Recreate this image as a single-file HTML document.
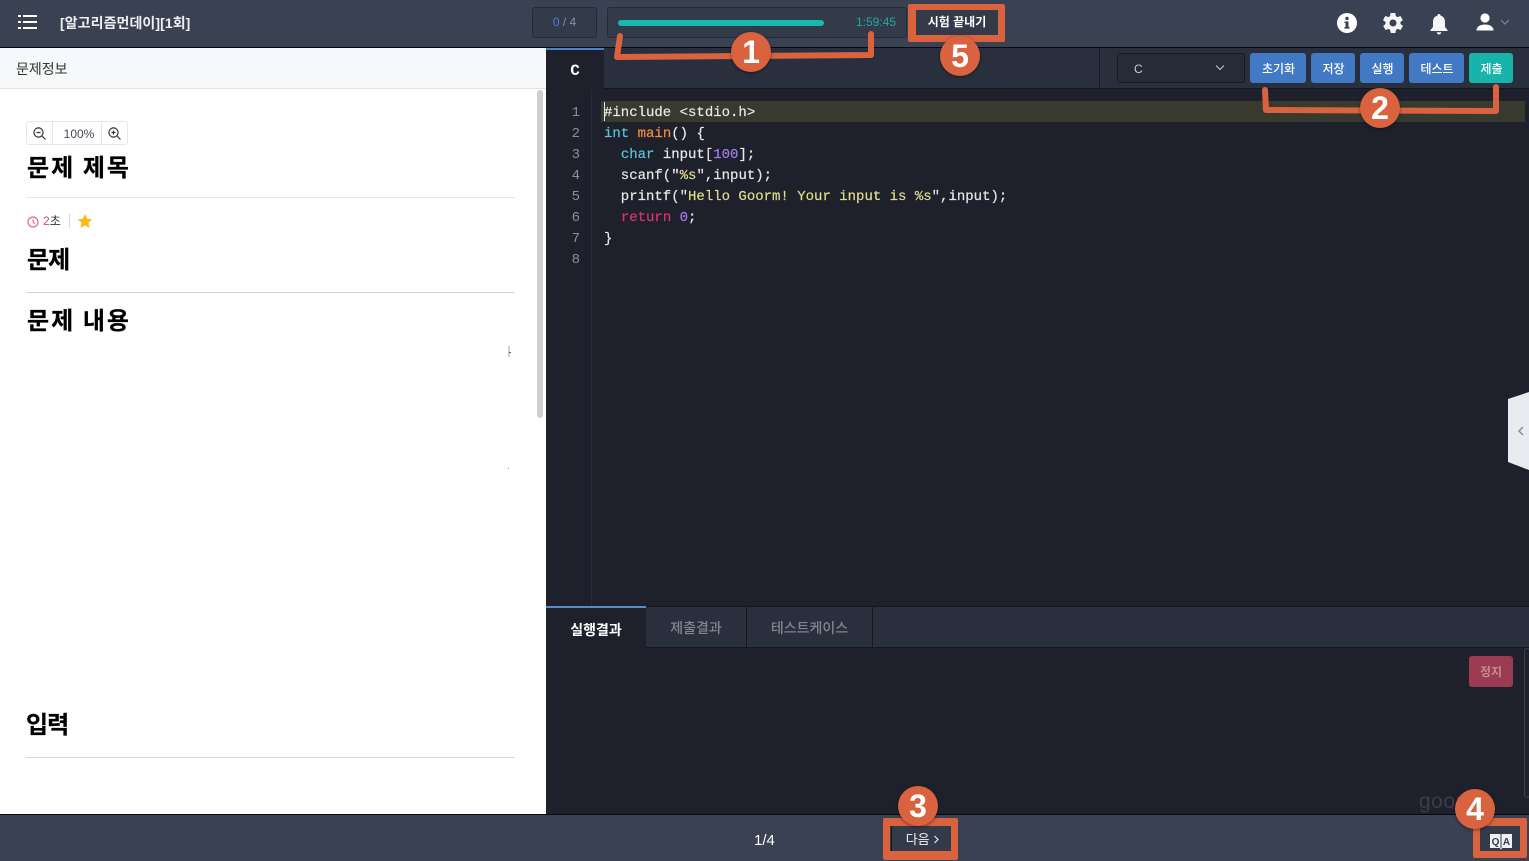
<!DOCTYPE html>
<html lang="ko"><head><meta charset="utf-8"><title>시험</title>
<style>
html,body{margin:0;padding:0;width:1529px;height:861px;overflow:hidden;background:#1e212c}
body{position:relative;font-family:"Liberation Sans","Noto Sans CJK KR",sans-serif;}
.a{position:absolute;box-sizing:border-box;white-space:nowrap}
.btn{position:absolute;top:53px;height:30px;border-radius:3px;background:#4279c4;color:#fff;font-size:12px;font-weight:500;line-height:32px;text-align:center;padding-left:1px;box-sizing:border-box}
.h{position:absolute;left:27px;color:#000;font-weight:700;font-size:24px;line-height:32px;white-space:nowrap;letter-spacing:2px;word-spacing:-1px;-webkit-text-stroke:.2px #000}
.h1{letter-spacing:-1px;word-spacing:0}
.hr{position:absolute;left:26px;width:489px;height:1px;background:#d4d5d8}
.ln{position:absolute;left:560px;width:20px;text-align:right;font:14px/21px "Liberation Mono",monospace;color:#8a8f9a}
.cd{position:absolute;left:604px;font:14px/21px "Liberation Mono",monospace;color:#e8e8e6;white-space:pre;-webkit-text-stroke:.2px}
.k{color:#5cc3d6}.f{color:#f0913a}.n{color:#a37ce8}.s{color:#e5dc8a}.r{color:#e0306e}
.circ{position:absolute;width:40px;height:40px;border-radius:50%;background:#d9623f;color:#fff;font:700 32px/40px "Liberation Sans",sans-serif;text-align:center;box-shadow:0 1px 3px rgba(0,0,0,.45)}
</style></head><body>

<!-- top bar -->
<div class="a" style="left:0;top:0;width:1529px;height:48px;background:#3a4152;border-bottom:1px solid #0a0a0e"></div>
<svg class="a" style="left:17px;top:13px" width="22" height="18" viewBox="0 0 22 18"><g fill="#fff"><rect x="1" y="2" width="3" height="2"/><rect x="6" y="2" width="14" height="2"/><rect x="1" y="8" width="3" height="2"/><rect x="6" y="8" width="14" height="2"/><rect x="1" y="14" width="3" height="2"/><rect x="6" y="14" width="14" height="2"/></g></svg>
<div class="a" style="left:60px;top:13px;color:#eef0f3;font-size:14px;font-weight:700;line-height:20px;letter-spacing:.07px">[알고리즘먼데이][1회]</div>

<div class="a" style="left:532px;top:7px;width:65px;height:31px;background:#333a4a;border:1px solid #252a36;border-radius:3px;text-align:center;font-size:12px;line-height:29px;color:#8a909c"><span style="color:#4f7fc8">0</span> / 4</div>
<div class="a" style="left:607px;top:7px;width:300px;height:31px;background:#333a4a;border:1px solid #252a36;border-radius:3px"></div>
<div class="a" style="left:618px;top:20px;width:206px;height:6px;background:#18b8ad;border-radius:3px"></div>
<div class="a" style="left:856px;top:13px;color:#26a89f;font-size:12px;line-height:18px">1:59:45</div>
<div class="a" style="left:908px;top:4px;width:97px;height:38px;border-style:solid;border-color:#d9623f;border-width:6px 7px 7px 8px;border-radius:2px;background:#333a4a;color:#fff;font-size:12px;font-weight:700;line-height:25px;text-align:center">시험 끝내기</div>

<!-- right icons -->
<svg class="a" style="left:1336px;top:12px" width="22" height="22" viewBox="0 0 22 22"><circle cx="11" cy="11" r="10" fill="#fff"/><rect x="9.500" y="9.500" width="3" height="7" fill="#3a4152"/><rect x="8.500" y="15" width="5" height="1.600" fill="#3a4152"/><rect x="8.500" y="9.500" width="3" height="1.500" fill="#3a4152"/><circle cx="11" cy="6.500" r="1.700" fill="#3a4152"/></svg>
<svg class="a" style="left:1381px;top:11px" width="24" height="24" viewBox="0 0 24 24"><path fill="#f4f5f7" fill-rule="evenodd" d="M19.400 13c.1-.3.1-.7.1-1s0-.7-.1-1l2.100-1.600c.2-.2.2-.4.1-.6l-2-3.500c-.1-.2-.4-.3-.6-.2l-2.500 1c-.5-.4-1.100-.7-1.700-1l-.4-2.600c0-.3-.2-.5-.5-.5h-4c-.3 0-.5.2-.5.500l-.4 2.600c-.6.3-1.200.6-1.700 1l-2.500-1c-.2-.1-.5 0-.6.2l-2 3.500c-.1.2-.1.4.1.6L4.600 11c-.1.300-.1.700-.1 1s0 .7.1 1l-2.100 1.600c-.2.2-.2.4-.1.6l2 3.500c.1.2.4.3.6.2l2.500-1c.5.4 1.100.7 1.700 1l.4 2.600c0 .3.2.5.5.5h4c.3 0 .5-.2.5-.5l.4-2.600c.6-.3 1.200-.6 1.700-1l2.500 1c.2.1.5 0 .6-.2l2-3.500c.1-.2.1-.4-.1-.6zM12 15.500a3.500 3.500 0 1 1 0-7 3.500 3.500 0 0 1 0 7z"/></svg>
<svg class="a" style="left:1428px;top:12px" width="22" height="24" viewBox="0 0 22 24"><path fill="#f4f5f7" d="M11 2c1 0 1.600.7 1.600 1.600C15.500 4.300 17 6.800 17 10v5l2.500 3v1h-17v-1L5 15v-5c0-3.200 1.500-5.700 4.400-6.400C9.400 2.700 10 2 11 2z"/><path fill="#f4f5f7" d="M8.800 20.300h4.400a2.200 2.200 0 0 1-4.400 0z"/></svg>
<svg class="a" style="left:1475px;top:12px" width="20" height="20" viewBox="0 0 20 20"><circle cx="10" cy="6" r="4.600" fill="#fff"/><path fill="#fff" d="M1.500 18.500c0-4 3.800-6 8.500-6s8.500 2 8.500 6z"/></svg>
<svg class="a" style="left:1499px;top:18px" width="12" height="9" viewBox="0 0 12 9"><path d="M2 2l4 4 4-4" fill="none" stroke="#7e8593" stroke-width="1.200"/></svg>

<!-- left panel -->
<div class="a" style="left:0;top:48px;width:546px;height:766px;background:#fff"></div>
<div class="a" style="left:0;top:48px;width:546px;height:41px;background:#f6f8f9;border-bottom:1px solid #e2e4e7;color:#333;font-size:14px;line-height:43px;padding-left:16px">문제정보</div>
<div class="a" style="left:537px;top:90px;width:6px;height:328px;background:#cfcfcf;border-radius:3px"></div>

<div class="a" style="left:26px;top:121px;width:102px;height:24px;border:1px solid #e6e7ea;border-radius:3px;background:#fff"></div>
<div class="a" style="left:52px;top:122px;width:1px;height:22px;background:#e6e7ea"></div>
<div class="a" style="left:101px;top:122px;width:1px;height:22px;background:#e6e7ea"></div>
<svg class="a" style="left:32px;top:126px" width="15" height="15" viewBox="0 0 15 15"><circle cx="6.500" cy="6.500" r="4.600" fill="none" stroke="#333" stroke-width="1.200"/><path d="M10 10l3.500 3.500M4.500 6.500h4" stroke="#333" stroke-width="1.200" fill="none"/></svg>
<svg class="a" style="left:107px;top:126px" width="15" height="15" viewBox="0 0 15 15"><circle cx="6.500" cy="6.500" r="4.600" fill="none" stroke="#333" stroke-width="1.200"/><path d="M10 10l3.500 3.500M4.500 6.500h4M6.500 4.500v4" stroke="#333" stroke-width="1.200" fill="none"/></svg>
<div class="a" style="left:55px;top:125px;width:48px;text-align:center;font-size:12px;line-height:19px;color:#444b58">100%</div>

<div class="h" style="top:153px">문제 제목</div>
<div class="hr" style="top:197px;background:#e4e5e8"></div>
<svg class="a" style="left:27px;top:216px" width="12" height="12" viewBox="0 0 12 12"><circle cx="6" cy="6" r="5" fill="none" stroke="#e8668a" stroke-width="1.200"/><path d="M6 3v3l2 2" fill="none" stroke="#e8668a" stroke-width="1"/></svg>
<div class="a" style="left:43px;top:213px;font-size:12px;line-height:17px;color:#333"><span style="color:#d9486c">2</span>초</div>
<div class="a" style="left:69px;top:214px;width:1px;height:14px;background:#d8d9dc"></div>
<svg class="a" style="left:77px;top:213px" width="16" height="16" viewBox="0 0 16 16"><path fill="#fcb813" d="M8 1l2.200 4.700 5 .6-3.700 3.500 1 5.100L8 12.400 3.500 14.900l1-5.100L.8 6.300l5-.6z"/></svg>

<div class="h h1" style="top:245px">문제</div>
<div class="hr" style="top:292px"></div>
<div class="h" style="top:306px">문제 내용</div>
<div class="a" style="left:508px;top:346px;width:2px;height:11px;background:#c6d2e4"></div>
<div class="a" style="left:509px;top:352px;width:2px;height:1px;background:#555"></div>
<div class="a" style="left:508px;top:468px;width:1px;height:1px;background:#9a9a9a"></div>
<div class="h h1" style="top:710px;left:26px">입력</div>
<div class="hr" style="top:757px"></div>

<!-- editor -->
<div class="a" style="left:546px;top:48px;width:983px;height:558px;background:#1e212c"></div>
<div class="a" style="left:546px;top:48px;width:983px;height:41px;background:#2a2f3d;border-bottom:1px solid #15171e"></div>
<div class="a" style="left:546px;top:48px;width:58px;height:41px;background:#1e212c;border-top:2px solid #4a82c8;color:#fff;font:700 16px/43px 'Liberation Mono',monospace;text-align:center">C</div>
<div class="a" style="left:1099px;top:48px;width:1px;height:41px;background:#1a1c25"></div>
<div class="a" style="left:591px;top:89px;width:1px;height:517px;background:#272b37"></div>

<div class="a" style="left:1117px;top:53px;width:128px;height:30px;background:#262b38;border:1px solid #171a22;border-radius:3px;color:#c9ccd2;font-size:12px;line-height:31px;padding-left:16px">C</div>
<svg class="a" style="left:1214px;top:63px" width="12" height="10" viewBox="0 0 12 10"><path d="M2 2.500l4 4 4-4" fill="none" stroke="#b8bcc4" stroke-width="1.200"/></svg>
<div class="btn" style="left:1250px;width:56px">초기화</div>
<div class="btn" style="left:1311px;width:44px">저장</div>
<div class="btn" style="left:1360px;width:44px">실행</div>
<div class="btn" style="left:1409px;width:55px">테스트</div>
<div class="btn" style="left:1469px;width:44px;background:#18b4a9">제출</div>

<div class="a" style="left:601px;top:101px;width:924px;height:21px;background:#38392f"></div>
<div class="a" style="left:604px;top:102px;width:1px;height:19px;background:#e8e8e6"></div>
<div class="ln" style="top:103px">1</div><div class="ln" style="top:124px">2</div><div class="ln" style="top:145px">3</div><div class="ln" style="top:166px">4</div><div class="ln" style="top:187px">5</div><div class="ln" style="top:208px">6</div><div class="ln" style="top:229px">7</div><div class="ln" style="top:250px">8</div>
<div class="cd" style="top:103px">#include &lt;stdio.h&gt;</div>
<div class="cd" style="top:124px"><span class="k">int</span> <span class="f">main</span>() {</div>
<div class="cd" style="top:145px">  <span class="k">char</span> input[<span class="n">100</span>];</div>
<div class="cd" style="top:166px">  scanf("<span class="s">%s</span>",input);</div>
<div class="cd" style="top:187px">  printf("<span class="s">Hello Goorm! Your input is %s</span>",input);</div>
<div class="cd" style="top:208px">  <span class="r">return</span> <span class="n">0</span>;</div>
<div class="cd" style="top:229px">}</div>

<!-- side handle -->
<svg class="a" style="left:1508px;top:390px" width="21" height="82" viewBox="0 0 21 82"><path d="M0 9L21 2v78L0 72z" fill="#e9ebf0"/><path d="M15 37l-4 4 4 4" fill="none" stroke="#8b8f98" stroke-width="1.500"/></svg>

<!-- results -->
<div class="a" style="left:546px;top:606px;width:983px;height:42px;background:#2a2f3d;border-top:1px solid #15171e;border-bottom:1px solid #15171e"></div>
<div class="a" style="left:546px;top:606px;width:100px;height:43px;background:#1e212c;border-top:2px solid #5b8bc8;color:#fff;font-size:14px;font-weight:700;line-height:44px;text-align:center">실행결과</div>
<div class="a" style="left:646px;top:607px;width:101px;height:40px;border-right:1px solid #15171e;color:#7f8591;font-size:14px;font-weight:500;line-height:42px;text-align:center">제출결과</div>
<div class="a" style="left:747px;top:607px;width:126px;height:40px;border-right:1px solid #15171e;color:#7f8591;font-size:14px;font-weight:500;line-height:42px;text-align:center">테스트케이스</div>
<div class="a" style="left:1469px;top:656px;width:44px;height:31px;background:#9b3a50;border-radius:3px;color:#c68a96;font-size:12px;font-weight:700;line-height:32px;text-align:center">정지</div>
<div class="a" style="left:1524px;top:648px;width:6px;height:150px;border:1px solid #3a3e4a;border-radius:3px"></div>
<div class="a" style="left:1419px;top:790px;color:#3a3d47;font-size:21px;line-height:24px;letter-spacing:.5px">goorme</div>

<!-- bottom bar -->
<div class="a" style="left:0;top:814px;width:1529px;height:47px;background:#3a4152;border-top:1px solid #0a0a0e"></div>
<div class="a" style="left:754px;top:831px;color:#fff;font-size:15px;line-height:20px">1/4</div>
<div class="a" style="left:883px;top:818px;width:75px;height:42px;border-style:solid;border-color:#d9623f;border-width:8px 7px 9px 7px;border-radius:2px;background:#333a4a;color:#f0f1f3;font-size:13px;line-height:27px;text-align:center;padding-left:5px"><span style="position:absolute;left:1px;top:0;width:1px;height:25px;background:#15171e"></span>다음 <svg width="7" height="9" viewBox="0 0 7 9"><path d="M1.500 1l3.500 3.500L1.500 8" fill="none" stroke="#f0f1f3" stroke-width="1.100"/></svg></div>
<div class="a" style="left:1473px;top:818px;width:54px;height:40px;border-style:solid;border-color:#d9623f;border-width:8px 7px 7px 7px;border-radius:2px;background:#333a4a"></div>
<svg class="a" style="left:1490px;top:833px" width="22" height="18" viewBox="0 0 22 18"><path d="M0 1h10l1 1 1-1h10v14H12l-1 2-1-2H0z" fill="#edf0f6"/><path d="M11 2v13" stroke="#333a4a"/><text x="5.500" y="12" font-family="Liberation Sans" font-size="10" font-weight="700" fill="#333a4a" text-anchor="middle">Q</text><text x="16.500" y="12" font-family="Liberation Sans" font-size="10" font-weight="700" fill="#333a4a" text-anchor="middle">A</text></svg>

<!-- annotations -->
<svg class="a" style="left:0;top:0;pointer-events:none" width="1529" height="861" viewBox="0 0 1529 861">
<path d="M620 36l-3 21 254-2V34" fill="none" stroke="#d9623f" stroke-width="6" stroke-linejoin="round" stroke-linecap="round"/>
<path d="M1265 90l1 20 230 1V87" fill="none" stroke="#d9623f" stroke-width="6" stroke-linejoin="round" stroke-linecap="round"/>
</svg>
<div class="circ" style="left:731px;top:32px">1</div>
<div class="circ" style="left:1360px;top:88px">2</div>
<div class="circ" style="left:898px;top:786px">3</div>
<div class="circ" style="left:1455px;top:789px">4</div>
<div class="circ" style="left:940px;top:36px">5</div>
</body></html>
